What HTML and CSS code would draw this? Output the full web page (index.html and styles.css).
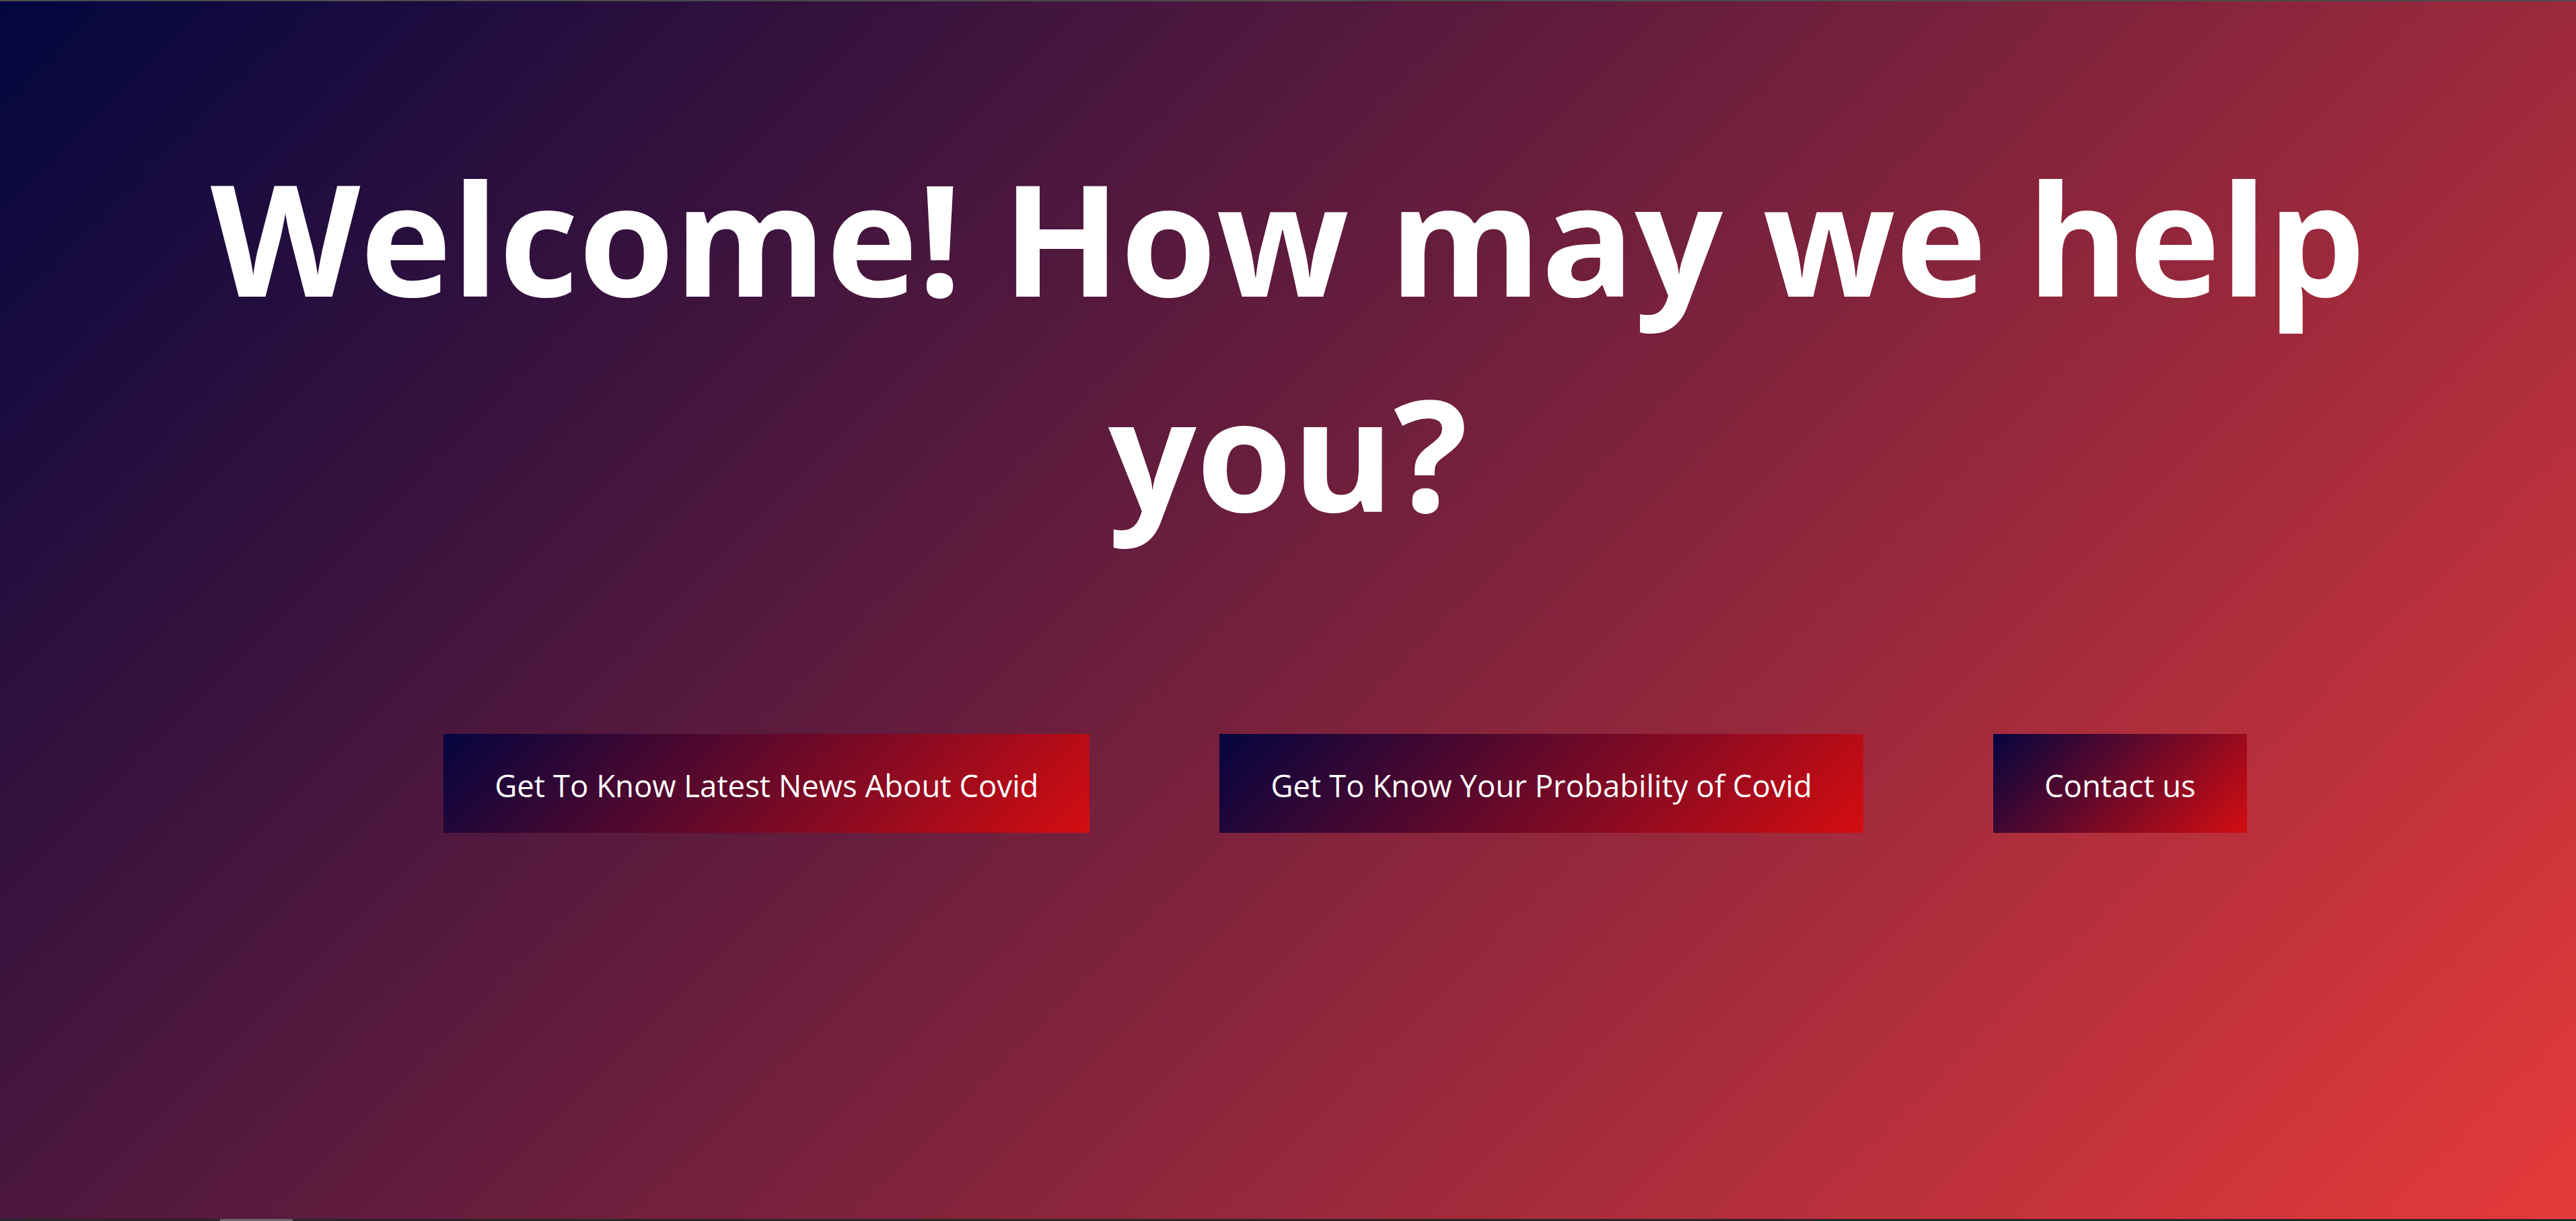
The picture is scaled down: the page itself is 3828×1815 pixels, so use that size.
FILE: index.html
```html
<!DOCTYPE html>
<html lang="en">
<head>
<meta charset="utf-8">
<title>Welcome</title>
<link rel="stylesheet" href="styles.css">
</head>
<body>
<div class="page">
  <main class="hero">
    <h1 class="title">Welcome! How may we help you?</h1>
    <nav class="actions">
      <a class="btn" href="#">Get To Know Latest News About Covid</a>
      <a class="btn" href="#">Get To Know Your Probability of Covid</a>
      <a class="btn" href="#">Contact us</a>
    </nav>
  </main>
  <div class="hbar"><span class="thumb"></span></div>
</div>
</body>
</html>
```
FILE: styles.css
```css
* { box-sizing: border-box; }
html, body { margin: 0; padding: 0; }
body {
  font-family: "Open Sans", "Noto Sans", sans-serif;
  color: #ffffff;
  background: #262626;
}
.page {
  height: 1815px;
  display: flex;
  flex-direction: column;
  border-top: 2px solid #4b4b4b;
}
.hero {
  flex: 1;
  background: linear-gradient(135deg, #02063f 0%, #e53a3a 100%);
  display: flex;
  flex-direction: column;
  align-items: center;
}
.title {
  margin: 190px 0 0 0;
  width: 3400px;
  font-size: 230px;
  line-height: 320px;
  font-weight: 700;
  text-align: center;
  letter-spacing: 0;
}
.actions {
  margin-top: 259px;
  align-self: stretch;
  padding-left: 170px;
  display: flex;
  justify-content: center;
  gap: 193px;
}
.btn {
  display: flex;
  align-items: center;
  height: 147px;
  padding: 5px 76px 0 76px;
  font-size: 45.5px;
  color: #ffffff;
  text-decoration: none;
  white-space: nowrap;
  background: linear-gradient(135deg, #04053f 0%, #d40d11 100%);
}
.hbar {
  height: 3px;
  background: #262626;
  display: flex;
}
.thumb {
  margin-left: 327px;
  width: 108px;
  background: #6a6a6a;
}
```
